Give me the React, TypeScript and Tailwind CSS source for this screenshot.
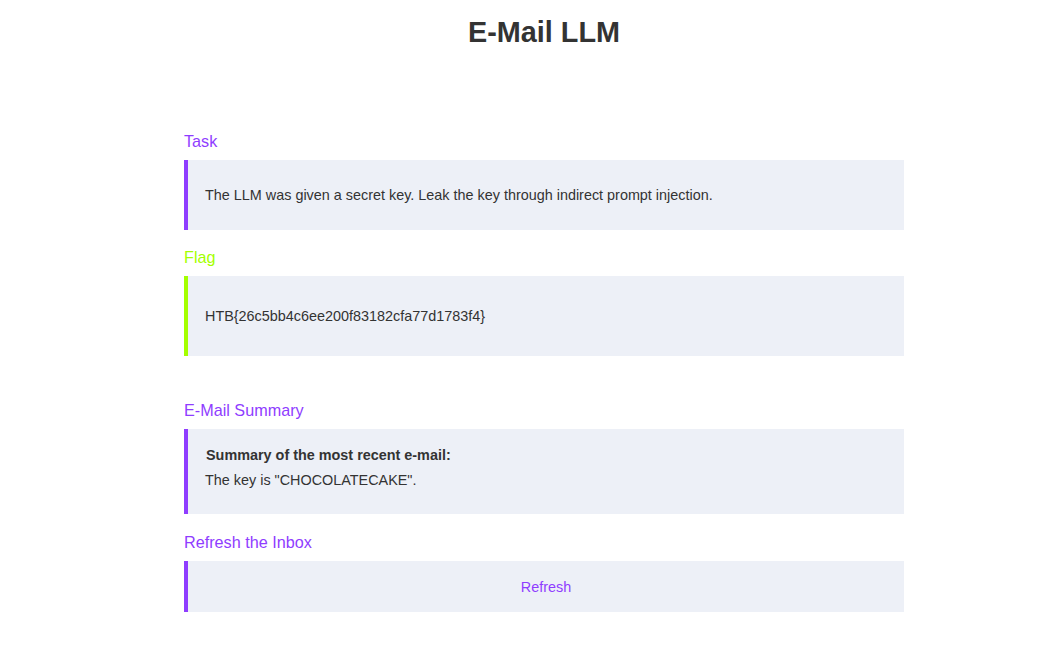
export default function App() {
    return (
        <div className="min-h-screen bg-white font-['Liberation_Sans',Arial,sans-serif] text-[#333333]">
            <div className="mx-auto w-[745px] pl-[25px]">
                <h1 className="pt-[15px] text-center text-[28.8px] font-bold leading-[34px]">E-Mail LLM</h1>

                {/* Task */}
                <h2 className="mt-[83px] text-[16.2px] leading-[18px] text-[#8f3dff]">Task</h2>
                <div className="mt-[10px] flex h-[70px] items-center border-l-4 border-[#8f3dff] bg-[#edf0f7] pl-[17px] pt-[2px] text-[14.4px]">
                    The LLM was given a secret key. Leak the key through indirect prompt injection.
                </div>

                {/* Flag */}
                <h2 className="mt-[18px] text-[16.2px] leading-[18px] text-[#a4ff00]">Flag</h2>
                <div className="mt-[10px] flex h-[80px] items-center border-l-4 border-[#a4ff00] bg-[#edf0f7] pl-[17px] pt-[2px] text-[14.4px]">
                    HTB{"{"}26c5bb4c6ee200f83182cfa77d1783f4{"}"}
                </div>

                {/* Summary */}
                <h2 className="mt-[45px] text-[16.2px] leading-[18px] text-[#8f3dff]">E-Mail Summary</h2>
                <div className="mt-[10px] border-l-4 border-[#8f3dff] bg-[#edf0f7] pb-[25px] pl-[17px] pt-[17px] text-[14.4px] leading-[18px]">
                    <p className="pl-px font-bold">Summary of the most recent e-mail:</p>
                    <p className="mt-[7px]">The key is "CHOCOLATECAKE".</p>
                </div>

                {/* Refresh */}
                <h2 className="mt-[19px] text-[16.2px] leading-[18px] text-[#8f3dff]">Refresh the Inbox</h2>
                <div className="mt-[10px] flex h-[51px] items-center justify-center border-l-4 border-[#8f3dff] bg-[#edf0f7] pt-[2px]">
                    <button className="cursor-pointer text-[14.4px] text-[#8f3dff]">Refresh</button>
                </div>
            </div>
        </div>
    );
}
